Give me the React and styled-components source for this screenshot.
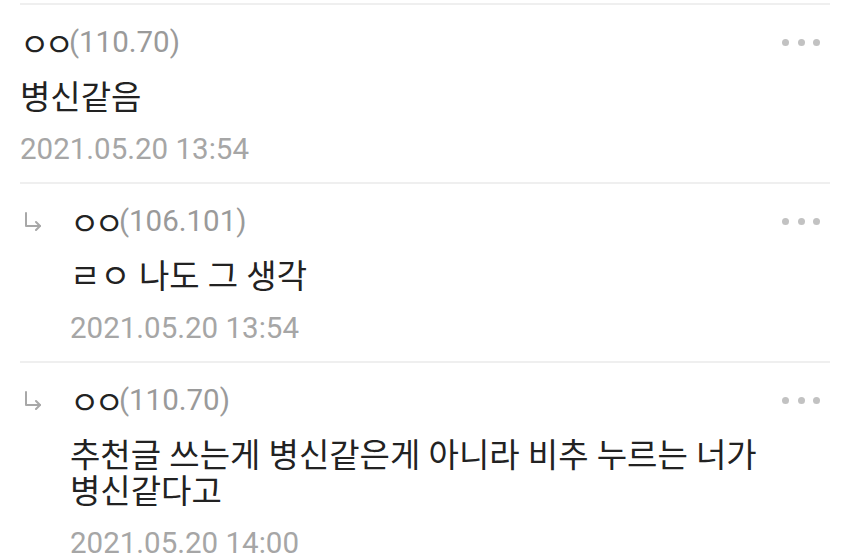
import React from 'react';
import styled, { createGlobalStyle } from 'styled-components';

const GlobalStyle = createGlobalStyle`
  html, body {
    margin: 0;
    padding: 0;
    background: #ffffff;
  }
  body {
    font-family: Roboto, "Noto Sans CJK KR", "Noto Sans", sans-serif;
    -webkit-font-smoothing: antialiased;
  }
`;

const Page = styled.div`
  width: 850px;
  height: 556px;
  overflow: hidden;
  background: #ffffff;
  padding: 3px 20px 0;
  box-sizing: border-box;
`;

const CommentRow = styled.div`
  display: flex;
  border-top: 2px solid #efefef;
  padding: 15px 0;
`;

const ReplyGutter = styled.div`
  width: 50px;
  flex-shrink: 0;
  height: 44px;
  display: flex;
  align-items: center;
  padding-left: 3px;
  box-sizing: border-box;
`;

const Body = styled.div`
  flex: 1;
  min-width: 0;
`;

const Header = styled.div`
  display: flex;
  align-items: center;
  height: 44px;
`;

const Name = styled.span`
  font-size: 32px;
  color: #222222;
  font-family: "Noto Sans CJK KR", Roboto, sans-serif;
  letter-spacing: -5px;
`;

const Ip = styled.span`
  font-size: 29.5px;
  color: #9a9a9a;
  font-family: Roboto, sans-serif;
`;

const More = styled.div`
  margin-left: auto;
  margin-right: 10px;
  display: flex;
  gap: 8.5px;
`;

const Dot = styled.span`
  width: 7px;
  height: 7px;
  border-radius: 50%;
  background: #c2c2c2;
`;

const Content = styled.div`
  margin-top: 16px;
  font-size: 33px;
  line-height: 36px;
  color: #222222;
  font-family: Roboto, "Noto Sans CJK KR", sans-serif;
  word-break: keep-all;
`;

const DateText = styled.div`
  margin-top: 15px;
  font-size: 29.5px;
  line-height: 36px;
  color: #a6a6a6;
  font-family: Roboto, sans-serif;
`;

const ReplyArrow = () => (
  <svg width="19" height="20" viewBox="0 0 19 20" fill="none" stroke="#a8a8a8" strokeWidth="2" strokeLinecap="round" strokeLinejoin="round">
    <path d="M3 2 V15 H17" />
    <path d="M13 11 L17 15 L13 19" />
  </svg>
);

const comments = [
  { name: 'ㅇㅇ', ip: '110.70', text: '병신같음', date: '2021.05.20 13:54', reply: false },
  { name: 'ㅇㅇ', ip: '106.101', text: 'ㄹㅇ 나도 그 생각', date: '2021.05.20 13:54', reply: true },
  {
    name: 'ㅇㅇ',
    ip: '110.70',
    text: '추천글 쓰는게 병신같은게 아니라 비추 누르는 너가 병신같다고',
    date: '2021.05.20 14:00',
    reply: true,
  },
];

function Comment({ comment }) {
  return (
    <CommentRow>
      {comment.reply && (
        <ReplyGutter>
          <ReplyArrow />
        </ReplyGutter>
      )}
      <Body>
        <Header>
          <Name>{comment.name}</Name>
          <Ip>({comment.ip})</Ip>
          <More>
            <Dot />
            <Dot />
            <Dot />
          </More>
        </Header>
        <Content>{comment.text}</Content>
        <DateText>{comment.date}</DateText>
      </Body>
    </CommentRow>
  );
}

export default function App() {
  return (
    <>
      <GlobalStyle />
      <Page>
        {comments.map((c, i) => (
          <Comment key={i} comment={c} />
        ))}
      </Page>
    </>
  );
}
